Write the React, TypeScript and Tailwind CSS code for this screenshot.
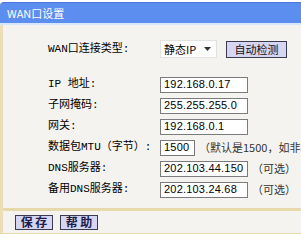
import React from "react";

function Row({ label, children }: { label: string; children: React.ReactNode }) {
  return (
    <div className="flex items-center h-[21px]">
      <div className="w-[112px] shrink-0 text-black font-['Liberation_Mono','Noto_Sans_CJK_SC',monospace] text-[11px] leading-none">
        {label}
      </div>
      {children}
    </div>
  );
}

function Input({ value, w = "w-[88px]" }: { value: string; w?: string }) {
  return (
    <div
      className={`${w} h-[16px] shrink-0 bg-white border border-[#7b7b7b] flex items-center pl-[3px] text-[11px] leading-none text-black font-['Liberation_Sans',sans-serif] tracking-[0.2px]`}
    >
      {value}
    </div>
  );
}

function Note({ text }: { text: string }) {
  return (
    <div className="ml-[4px] whitespace-nowrap text-[11px] leading-none text-[#333] font-['Noto_Sans_CJK_SC',sans-serif]">
      {text}
    </div>
  );
}

export default function App() {
  return (
    <div className="w-[301px] h-[240px] bg-white overflow-hidden pt-[2px] font-['Noto_Sans_CJK_SC',sans-serif] text-[11px]">
      <div className="h-[21px] bg-[#5c8ef0] border-t border-[#4a78d8] rounded-tl-[4px] text-white flex items-center pl-[7px] leading-none text-[11px]">
        WAN口设置
      </div>
      <div className="h-[2px] bg-[#d6e6fb]" />
      <div className="border-l-[3px] border-[#ecdfb8] bg-[#f5f3ef]">
        <div className="pl-[45px] pt-[15px] pb-[8px]">
          <div className="flex items-center h-[18px]">
            <div className="w-[112px] shrink-0 text-black font-['Liberation_Mono','Noto_Sans_CJK_SC',monospace] text-[11px] leading-none">
              WAN口连接类型:
            </div>
            <div className="w-[57px] h-[18px] bg-white border border-[#e2e2e2] flex items-center pl-[3px] pr-[5px] justify-between text-[11px] leading-none text-black font-['Noto_Sans_CJK_SC',sans-serif]">
              <span>静态IP</span>
              <svg width="7" height="4" viewBox="0 0 7 4">
                <path d="M0 0 L7 0 L3.5 4 Z" fill="#333" />
              </svg>
            </div>
            <div className="ml-[9px] w-[61px] h-[17px] bg-[#d6d6f2] border border-[#3a3a50] flex items-center justify-center text-[11px] leading-none text-[#111]">
              自动检测
            </div>
          </div>
          <div className="mt-[16px]">
            <Row label="IP 地址:">
              <Input value="192.168.0.17" />
            </Row>
            <Row label="子网掩码:">
              <Input value="255.255.255.0" />
            </Row>
            <Row label="网关:">
              <Input value="192.168.0.1" />
            </Row>
            <Row label="数据包MTU（字节）:">
              <Input value="1500" w="w-[35px]" />
              <Note text="（默认是1500，如非必要，请勿修改）" />
            </Row>
            <Row label="DNS服务器:">
              <Input value="202.103.44.150" />
              <Note text="（可选）" />
            </Row>
            <Row label="备用DNS服务器:">
              <Input value="202.103.24.68" />
              <Note text="（可选）" />
            </Row>
          </div>
        </div>
        <div className="h-[3px] bg-[#e8d9ab]" />
        <div className="h-[22px] flex items-center pl-[12px] gap-[7px]">
          <div className="w-[38px] h-[15px] bg-[#d6d6f2] border border-[#3a3a50] flex items-center justify-center text-[12px] leading-none text-[#1c1c4a] font-bold whitespace-pre">
            保 存
          </div>
          <div className="w-[38px] h-[15px] bg-[#d6d6f2] border border-[#3a3a50] flex items-center justify-center text-[12px] leading-none text-[#1c1c4a] font-bold whitespace-pre">
            帮 助
          </div>
        </div>
      </div>
      <div className="h-[1px] bg-[#e8d9ab]" />
    </div>
  );
}
